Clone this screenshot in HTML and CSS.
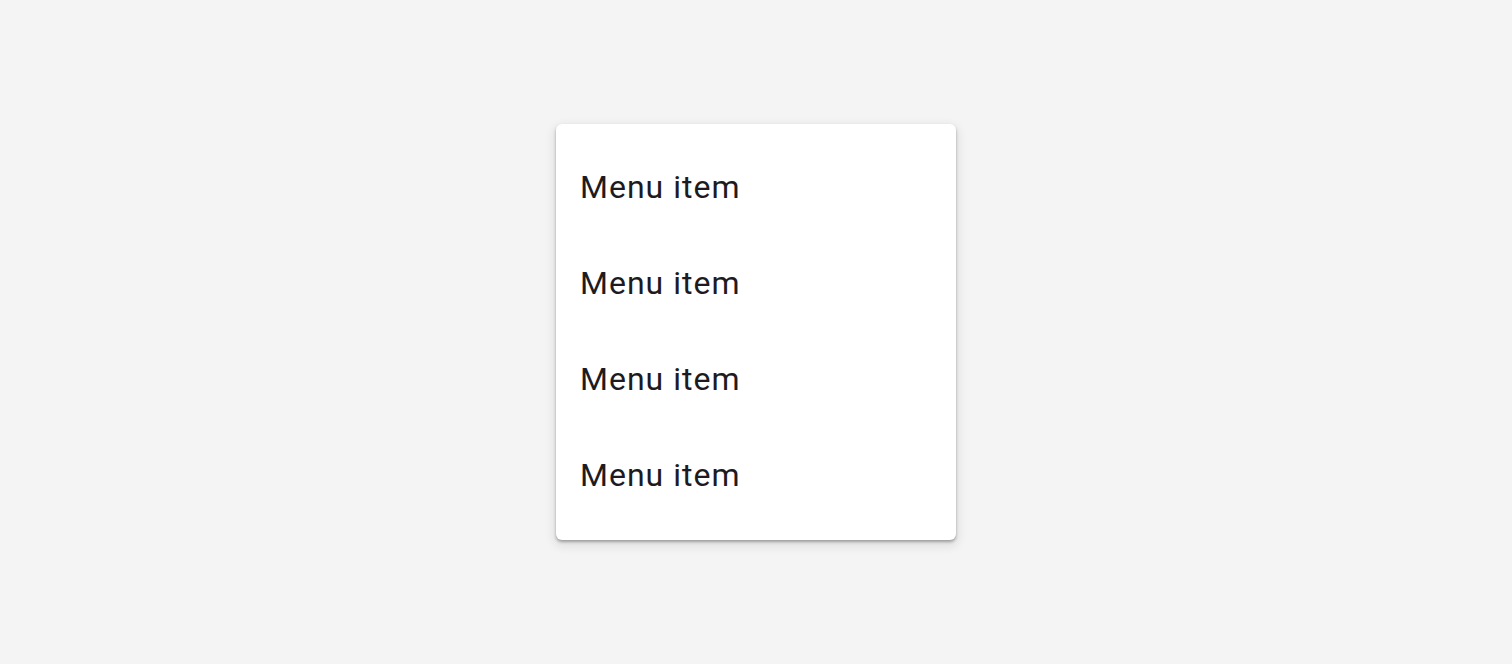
FILE: index.html
```html
<!DOCTYPE html>
<html lang="en">
<head>
<meta charset="utf-8">
<title>Menu</title>
<link rel="stylesheet" href="styles.css">
</head>
<body>
<div class="stage">
  <ul class="menu" role="menu">
    <li class="menu-item" role="menuitem">Menu item</li>
    <li class="menu-item" role="menuitem">Menu item</li>
    <li class="menu-item" role="menuitem">Menu item</li>
    <li class="menu-item" role="menuitem">Menu item</li>
  </ul>
</div>
</body>
</html>
```
FILE: styles.css
```css
html, body {
  margin: 0;
  padding: 0;
  height: 100%;
}
body {
  background: #f4f4f4;
  font-family: Roboto, "Noto Sans", sans-serif;
}
.stage {
  height: 100%;
  display: flex;
  align-items: center;
  justify-content: center;
}
.menu {
  list-style: none;
  margin: 0;
  padding: 16px 0;
  width: 400px;
  background: #ffffff;
  border-radius: 6px;
  box-shadow: 0 2px 3px rgba(0, 0, 0, 0.3), 0 4px 10px 3px rgba(0, 0, 0, 0.08);
}
.menu-item {
  height: 96px;
  box-sizing: border-box;
  display: flex;
  align-items: center;
  padding: 0 24px 2px;
  font-size: 32px;
  letter-spacing: 1px;
  color: #1d1b20;
}
```
